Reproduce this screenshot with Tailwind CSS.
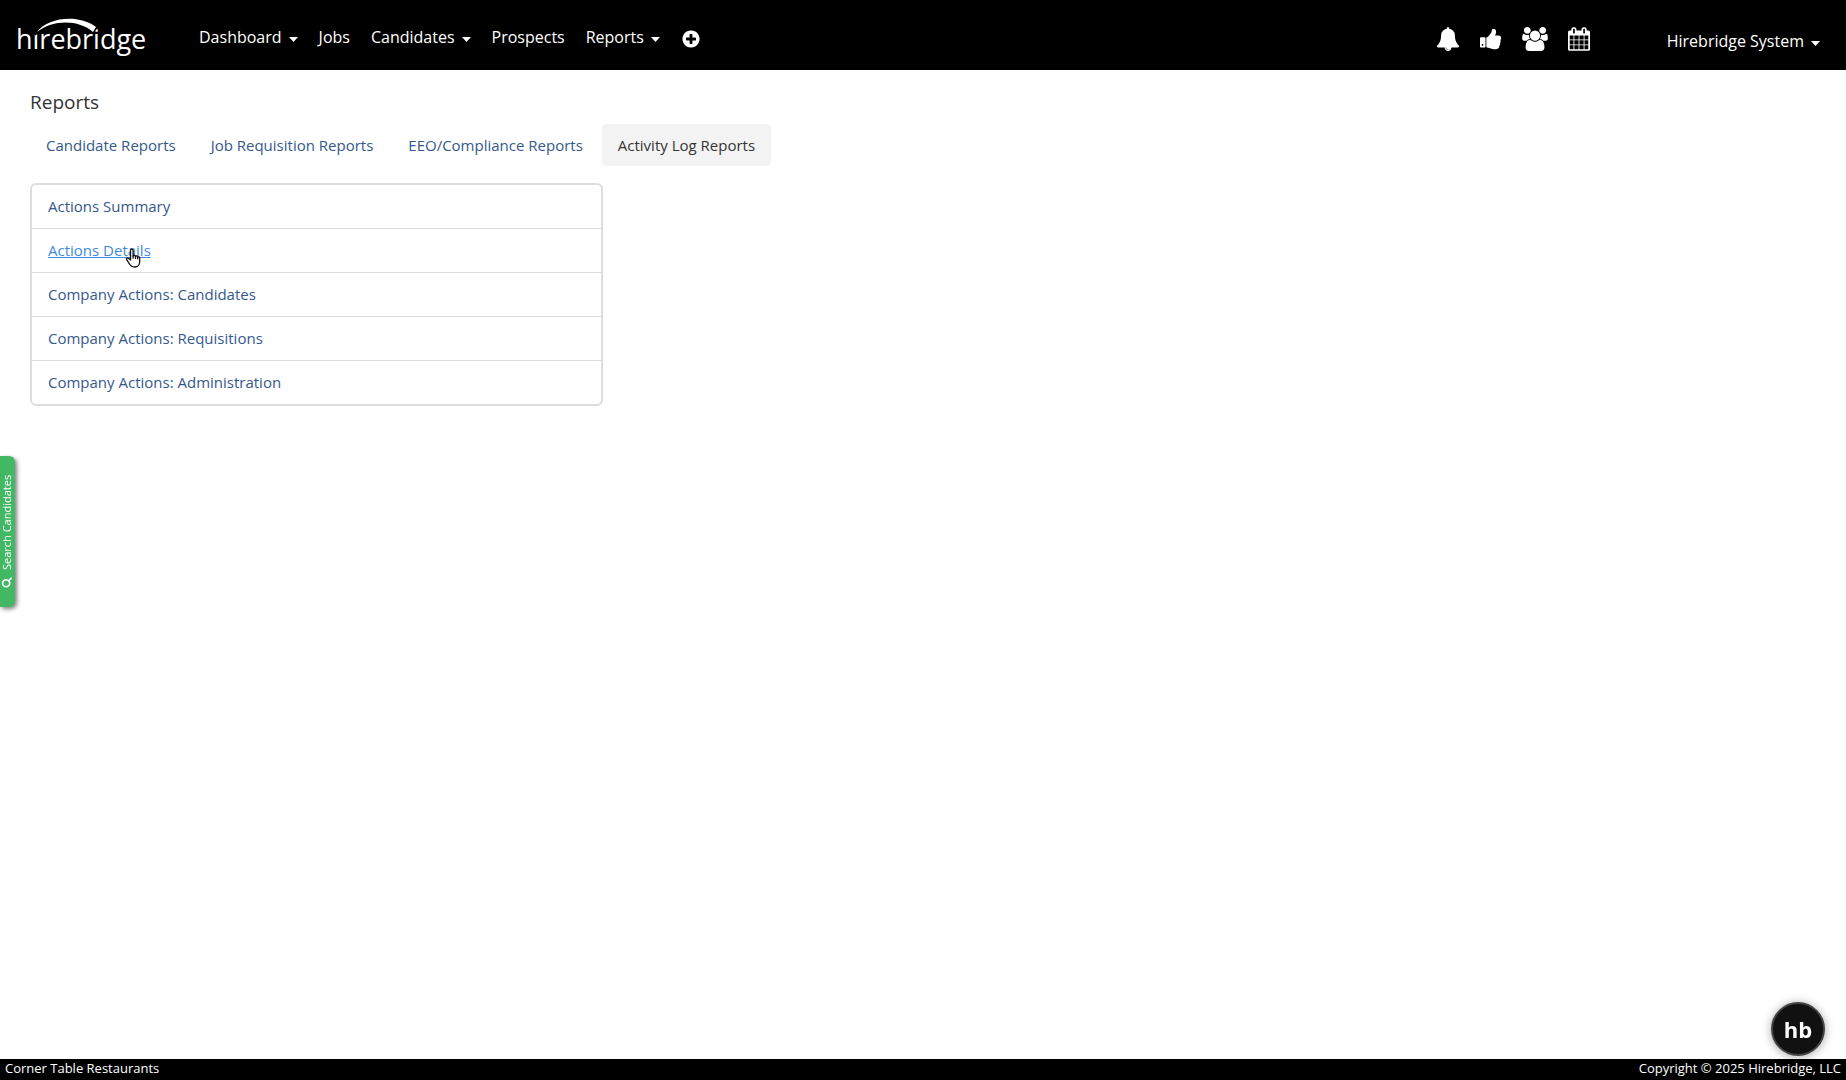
<!DOCTYPE html>
<html lang="en">
<head>
  <meta charset="UTF-8" />
  <meta name="viewport" content="width=device-width, initial-scale=1.0" />
  <title>Hirebridge - Reports</title>
  <script src="https://cdn.jsdelivr.net/npm/@tailwindcss/browser@4"></script>
</head>
<body class="min-h-screen flex flex-col bg-white text-[#333] font-['Open_Sans',sans-serif]">

  <header class="h-[70px] bg-black text-white flex items-center justify-between pl-4 pr-[26px]">
    <div class="flex items-center">
      <a href="#" aria-label="hirebridge">
        <svg class="w-[132px] h-14" viewBox="0 -8 132 56" fill="#fff">
          <text x="0" y="34" font-family="Open Sans, sans-serif" font-size="27">hirebridge</text>
          <path d="M17 18C32 3 64 2 80 15" fill="none" stroke="#000" stroke-width="7" />
          <path d="M21 17C32 2 63-1 80 12L77 17C63 5 38 4 21 17z" />
        </svg>
      </a>
      <nav class="ml-[51px] mt-1 flex items-center gap-[21px] text-base">
        <a href="#" class="flex items-center gap-[7px]">Dashboard
          <svg class="w-[9px] h-[5px] mt-1" viewBox="0 0 9 5" fill="currentColor"><path d="M0 0h9L4.500 5z" /></svg>
        </a>
        <a href="#">Jobs</a>
        <a href="#" class="flex items-center gap-[7px]">Candidates
          <svg class="w-[9px] h-[5px] mt-1" viewBox="0 0 9 5" fill="currentColor"><path d="M0 0h9L4.500 5z" /></svg>
        </a>
        <a href="#">Prospects</a>
        <a href="#" class="flex items-center gap-[7px]">Reports
          <svg class="w-[9px] h-[5px] mt-1" viewBox="0 0 9 5" fill="currentColor"><path d="M0 0h9L4.500 5z" /></svg>
        </a>
        <button type="button" aria-label="Add">
          <svg class="size-5 mt-1" viewBox="0 0 1792 1792" fill="currentColor"><path d="M1344 960v-128q0-26-19-45t-45-19h-256v-256q0-26-19-45t-45-19h-128q-26 0-45 19t-19 45v256h-256q-26 0-45 19t-19 45v128q0 26 19 45t45 19h256v256q0 26 19 45t45 19h128q26 0 45-19t19-45v-256h256q26 0 45-19t19-45zm320-64q0 209-103 385.5t-279.5 279.5-385.5 103-385.5-103-279.5-279.5-103-385.5 103-385.5 279.5-279.5 385.5-103 385.5 103 279.500 279.500 103 385.500z" /></svg>
        </button>
      </nav>
    </div>

    <div class="flex items-center">
      <div class="flex items-center gap-5 mt-2">
        <a href="#" aria-label="Notifications">
          <svg class="w-6 h-6" viewBox="0 0 1792 1792" fill="currentColor"><path d="M912 1696q0-16-16-16-59 0-101.500-42.500t-42.500-101.500q0-16-16-16t-16 16q0 73 51.500 124.500t124.500 51.500q16 0 16-16zm816-288q0 52-38 90t-90 38h-448q0 106-75 181t-181 75-181-75-75-181h-448q-52 0-90-38t-38-90q50-42 91-88t85-119.500 74.500-158.500 50-206 19.500-260q0-152 117-282.500t307-158.500q-8-19-8-39 0-40 28-68t68-28 68 28 28 68q0 20-8 39 190 28 307 158.500t117 282.500q0 139 19.500 260t50 206 74.500 158.500 85 119.500 91 88z" /></svg>
        </a>
        <a href="#" aria-label="Approvals">
          <svg class="w-[22px] h-6" viewBox="64 0 1664 1792" fill="currentColor"><path d="M320 1344q0-26-19-45t-45-19q-27 0-45.500 19t-18.500 45q0 27 18.500 45.500t45.500 18.500q26 0 45-18.500t19-45.500zm160-512v640q0 26-19 45t-45 19h-288q-26 0-45-19t-19-45v-640q0-26 19-45t45-19h288q26 0 45 19t19 45zm1184 0q0 86-55 149 15 44 15 76 3 76-43 137 17 56 0 117-15 57-54 94 9 112-49 181-64 76-197 78h-129q-66 0-144-15.500t-121.500-29-120.500-39.500q-123-43-158-44-26-1-45-19.500t-19-44.500v-641q0-25 18-43.500t43-20.500q24-2 76-59t101-121q68-87 101-120 18-18 31-48t17.500-48.500 13.500-60.500q7-39 12.500-61t19.500-52 34-50q19-19 45-19 46 0 82.500 10.500t60 26 40 40.500 24 45 12 50 5 45 .5 39q0 38-9.500 76t-19 60-27.500 56q-3 6-10 18t-11 22-8 24h277q78 0 135 57t57 135z" /></svg>
        </a>
        <a href="#" aria-label="Users">
          <svg class="w-[26px] h-6" viewBox="0 0 1920 1792" fill="currentColor"><path d="M593 896q-162 5-265 128h-134q-82 0-138-40.500t-56-118.500q0-353 124-353 6 0 43.500 21t97.500 42.500 119 21.500q67 0 133-23-5 37-5 66 0 139 81 256zm1071 637q0 120-73 189.500t-194 69.500h-874q-121 0-194-69.500t-73-189.500q0-53 3.500-103.500t14-109 26.500-108.500 43-97.500 62-81 85.500-53.500 111.500-20q10 0 43 21.500t73 48 107 48 135 21.500 135-21.500 107-48 73-48 43-21.500q61 0 111.500 20t85.500 53.500 62 81 43 97.500 26.500 108.500 14 109 3.500 103.500zm-1024-1277q0 106-75 181t-181 75-181-75-75-181 75-181 181-75 181 75 75 181zm704 384q0 159-112.500 271.500t-271.500 112.500-271.500-112.500-112.500-271.500 112.500-271.500 271.500-112.500 271.500 112.500 112.500 271.500zm576 225q0 78-56 118.500t-138 40.500h-134q-103-123-265-128 81-117 81-256 0-29-5-66 66 23 133 23 59 0 119-21.500t97.500-42.500 43.500-21q124 0 124 353zm-128-609q0 106-75 181t-181 75-181-75-75-181 75-181 181-75 181 75 75 181z" /></svg>
        </a>
        <a href="#" aria-label="Calendar">
          <svg class="w-[22px] h-6" viewBox="64 0 1664 1792" fill="currentColor"><path d="M192 1664h288v-288h-288v288zm352 0h320v-288h-320v288zm-352-352h288v-320h-288v320zm352 0h320v-320h-320v320zm-352-384h288v-288h-288v288zm736 736h320v-288h-320v288zm-384-736h320v-288h-320v288zm768 736h288v-288h-288v288zm-384-352h320v-320h-320v320zm-352-864v-288q0-13-9.500-22.500t-22.500-9.500h-64q-13 0-22.500 9.500t-9.500 22.500v288q0 13 9.500 22.500t22.500 9.500h64q13 0 22.500-9.500t9.500-22.500zm736 864h288v-320h-288v320zm-384-384h320v-288h-320v288zm384 0h288v-288h-288v288zm32-480v-288q0-13-9.500-22.500t-22.500-9.500h-64q-13 0-22.500 9.500t-9.500 22.500v288q0 13 9.500 22.500t22.500 9.500h64q13 0 22.500-9.500t9.500-22.500zm384-64v1280q0 52-38 90t-90 38h-1408q-52 0-90-38t-38-90v-1280q0-52 38-90t90-38h128v-96q0-66 47-113t113-47h64q66 0 113 47t47 113v96h384v-96q0-66 47-113t113-47h64q66 0 113 47t47 113v96h128q52 0 90 38t38 90z" /></svg>
        </a>
      </div>
      <a href="#" class="ml-[77px] mt-3 flex items-center gap-[7px] text-base">Hirebridge System
        <svg class="w-[9px] h-[5px] mt-1" viewBox="0 0 9 5" fill="currentColor"><path d="M0 0h9L4.500 5z" /></svg>
      </a>
    </div>
  </header>

  <main class="grow px-[30px] pt-[18px]">
    <h1 class="text-[19px] leading-7">Reports</h1>

    <nav class="mt-2 flex gap-[3px] text-[15px] leading-[22px] text-[#34598c]">
      <a href="#" class="px-4 py-2.5">Candidate Reports</a>
      <a href="#" class="px-4 py-2.5">Job Requisition Reports</a>
      <a href="#" class="px-4 py-2.5">EEO/Compliance Reports</a>
      <a href="#" class="px-4 py-2.5 rounded-sm bg-[#f3f3f3] text-[#333]">Activity Log Reports</a>
    </nav>

    <div class="mt-[17px] grid grid-cols-3 gap-[33px]">
      <ul class="rounded-md border-2 border-[#ddd] divide-y divide-[#ddd] text-[15px] leading-[23px] text-[#34598c]">
        <li class="px-4 py-2.5"><a href="#">Actions Summary</a></li>
        <li class="px-4 py-2.5">
          <a href="#" class="relative text-[#428bd8] underline">Actions Details
            <!-- pointer -->
            <svg class="absolute left-[77px] top-2 w-4 h-5" viewBox="0 0 16 20" fill="#fff" stroke="#111" stroke-width="1.300" stroke-linejoin="round" stroke-linecap="round">
              <path d="M5.500 12V2.500a1.300 1.300 0 0 1 2.600 0V8c.3-1 2.200-.9 2.400.4.500-.8 2.100-.6 2.200.7.700-.6 2-.2 2 1.100v3.300c0 3-1.800 5.500-5 5.500-3 0-4.200-1-5.300-3.200L1.700 11.700c-.8-1.500.8-2.400 1.800-1.400z" />
              <path d="M8.100 8v2.200M10.500 8.500v1.900M12.700 9.200v1.500" fill="none" />
            </svg>
          </a>
        </li>
        <li class="px-4 py-2.5"><a href="#">Company Actions: Candidates</a></li>
        <li class="px-4 py-2.5"><a href="#">Company Actions: Requisitions</a></li>
        <li class="px-4 py-2.5"><a href="#">Company Actions: Administration</a></li>
      </ul>
    </div>
  </main>

  <footer class="h-[21px] px-[5px] flex items-start justify-between bg-black text-white text-[13px] leading-[18px]">
    <span>Corner Table Restaurants</span>
    <span>Copyright © 2025 Hirebridge, LLC</span>
  </footer>

  <!-- candidate search tab on the left edge, turned to read upwards -->
  <button type="button" class="fixed left-0 top-[456px] w-[15px] h-[151px] pl-0.5 flex items-center justify-center gap-[7px] rounded-l-md bg-[#43b864] text-white text-[11px] leading-[13px] shadow-[-2px_-2px_4px_rgba(0,0,0,0.5)] [writing-mode:vertical-rl] rotate-180">
    <svg class="size-[11px] rotate-90" viewBox="0 0 1792 1792" fill="currentColor"><path d="M1216 832q0-185-131.500-316.500t-316.500-131.500-316.500 131.500-131.500 316.500 131.500 316.500 316.500 131.500 316.500-131.500 131.500-316.500zm512 832q0 52-38 90t-90 38q-54 0-90-38l-343-342q-179 124-399 124-143 0-273.500-55.500t-225-150-150-225-55.500-273.500 55.500-273.500 150-225 225-150 273.500-55.500 273.500 55.500 225 150 150 225 55.500 273.500q0 220-124 399l343 343q37 37 37 90z" /></svg>
    Search Candidates
  </button>

  <button type="button" class="fixed right-[21px] bottom-6 size-[54px] rounded-full border-2 border-[#444] bg-[#111] text-white text-[22px] font-bold shadow-[0_1px_10px_rgba(0,0,0,0.35)]">hb</button>
</body>
</html>
